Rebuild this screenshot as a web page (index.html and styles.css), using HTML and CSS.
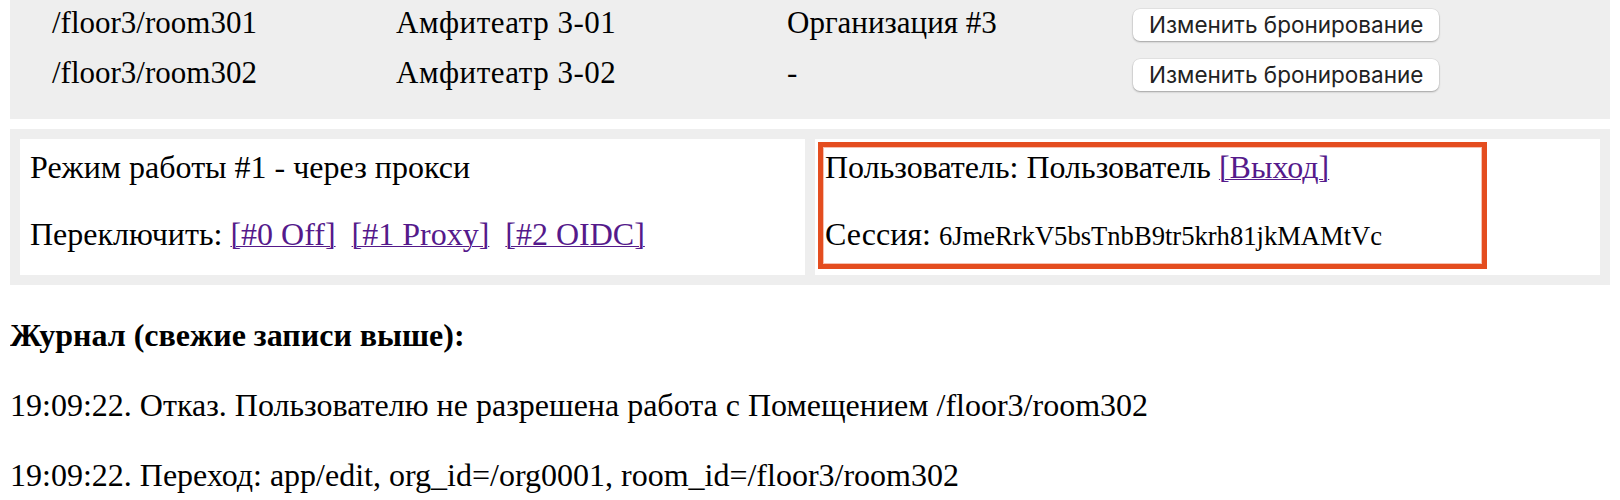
FILE: index.html
```html
<!DOCTYPE html>
<html lang="ru">
<head>
<meta charset="utf-8">
<title>Бронирование помещений</title>
<link rel="stylesheet" href="styles.css">
</head>
<body>
<div class="rooms">
  <div class="room-row">
    <span class="cell path">/floor3/room301</span>
    <span class="cell name">Амфитеатр 3-01</span>
    <span class="cell org">Организация #3</span>
    <span class="cell action"><button class="btn" type="button">Изменить бронирование</button></span>
  </div>
  <div class="room-row">
    <span class="cell path">/floor3/room302</span>
    <span class="cell name">Амфитеатр 3-02</span>
    <span class="cell org">-</span>
    <span class="cell action"><button class="btn" type="button">Изменить бронирование</button></span>
  </div>
</div>

<div class="panels">
  <div class="panel">
    <p class="line">Режим работы #1 - через прокси</p>
    <p class="line">Переключить: <a href="#" class="link">[#0 Off]</a>&nbsp; <a href="#" class="link">[#1 Proxy]</a>&nbsp; <a href="#" class="link">[#2 OIDC]</a></p>
  </div>
  <div class="panel panel-user">
    <p class="line">Пользователь: Пользователь <a href="#" class="link">[Выход]</a></p>
    <p class="line">Сессия: <span class="session">6JmeRrkV5bsTnbB9tr5krh81jkMAMtVc</span></p>
    <div class="highlight"></div>
  </div>
</div>

<div class="log">
  <h5 class="log-title">Журнал (свежие записи выше):</h5>
  <p class="log-entry">19:09:22. Отказ. Пользователю не разрешена работа с Помещением /floor3/room302</p>
  <p class="log-entry">19:09:22. Переход: app/edit, org_id=/org0001, room_id=/floor3/room302</p>
</div>
</body>
</html>
```

FILE: styles.css
```css
html, body {
  background: #ffffff;
}

body {
  margin: 0 10px;
  font-family: "Liberation Serif", "Times New Roman", serif;
  font-size: 32px;
  color: #000000;
}

.rooms {
  background: #eeeeee;
  padding: 0 0 23px 42px;
  display: grid;
  row-gap: 4px;
  font-size: 31px;
}

.room-row {
  display: grid;
  grid-template-columns: 344px 391px 346px auto;
  height: 46px;
  align-items: center;
}

.cell {
  white-space: nowrap;
}

.name {
  letter-spacing: 0.5px;
}

.btn {
  font-family: Inter, "Noto Sans", sans-serif;
  font-size: 22.5px;
  color: #222222;
  background: #ffffff;
  border: none;
  border-radius: 7px;
  height: 32px;
  padding: 0 16px;
  box-shadow: 0 1px 2px rgba(0, 0, 0, 0.3), 0 0 0 0.5px rgba(0, 0, 0, 0.08);
  cursor: pointer;
}

.panels {
  margin-top: 10px;
  background: #eeeeee;
  padding: 10px;
  display: grid;
  grid-template-columns: 1fr 1fr;
  gap: 10px;
}

.panel {
  background: #ffffff;
  padding: 11px 10px 21px;
  display: flex;
  flex-direction: column;
  gap: 32px;
}

.panel-user {
  position: relative;
}

.line {
  margin: 0;
  line-height: 35px;
  white-space: nowrap;
}

.link {
  color: #551a8b;
  text-decoration: underline;
  text-decoration-thickness: 1px;
}

.session {
  font-size: 26.6px;
}

.highlight {
  position: absolute;
  left: 3px;
  top: 3px;
  width: 669px;
  height: 127px;
  box-sizing: border-box;
  border: 5px solid #e44d1f;
  box-shadow: inset 0 0 0 1px rgba(228, 77, 31, 0.35);
  pointer-events: none;
}

.log {
  display: flex;
  flex-direction: column;
}

.log-title {
  font-size: 32px;
  font-weight: bold;
  line-height: 35px;
  margin: 33px 0 35px;
}

.log-entry {
  margin: 0 0 35px;
  line-height: 35px;
  white-space: nowrap;
}
```
